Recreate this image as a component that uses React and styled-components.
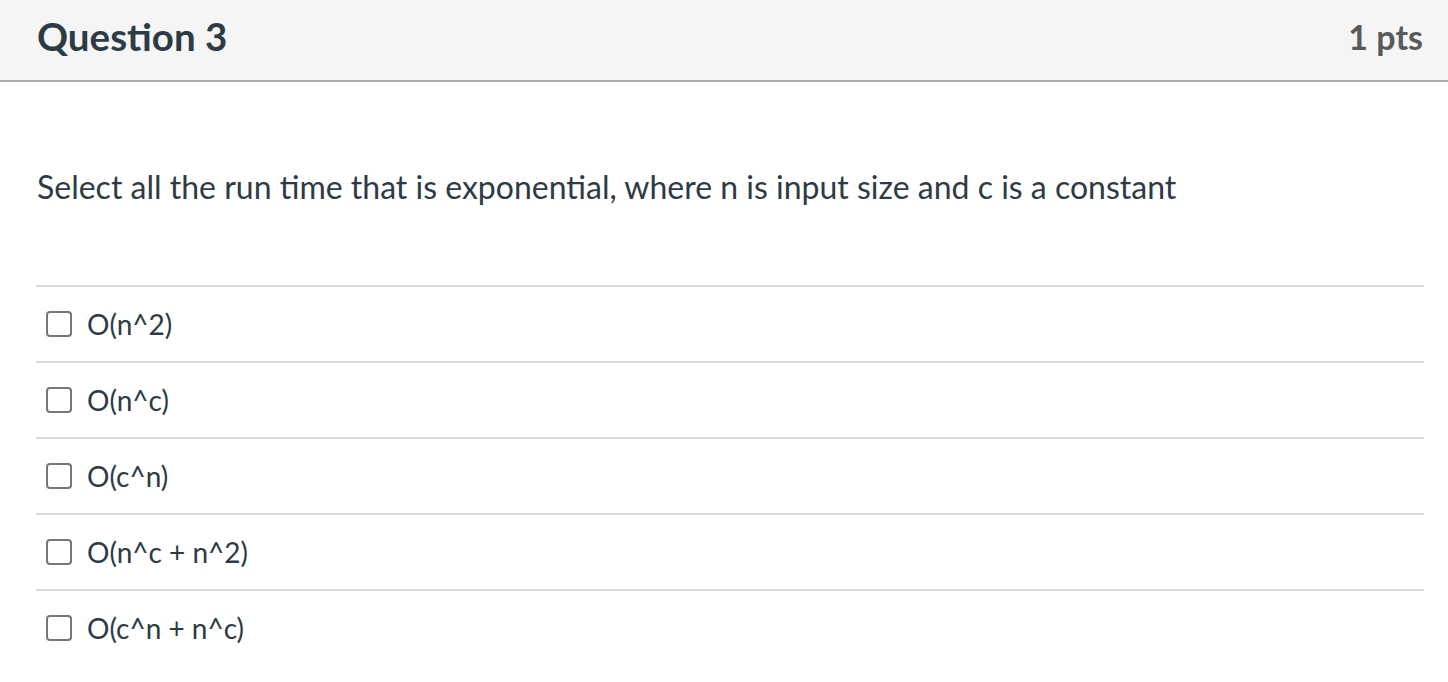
import React from "react";
import styled, { createGlobalStyle } from "styled-components";

const Global = createGlobalStyle`
  html, body { margin: 0; padding: 0; background: #fff; }
  body { font-family: Lato, "Open Sans", sans-serif; color: #2d3b45; }
`;

const Page = styled.div`
  width: 1448px;
  height: 682px;
  overflow: hidden;
`;

const Header = styled.header`
  box-sizing: border-box;
  height: 82px;
  background: #f5f5f5;
  border-bottom: 2px solid #aaaaaa;
  display: flex;
  align-items: center;
  justify-content: space-between;
  padding: 0 25px 8px 37px;
`;

const Title = styled.h2`
  margin: 0;
  font-size: 38.5px;
  font-weight: 700;
  color: #2d3b45;
`;

const Points = styled.div`
  font-size: 34px;
  font-weight: 700;
  color: #5a5a5a;
`;

const Body = styled.div`
  padding: 0 24px 0 36px;
`;

const QuestionText = styled.p`
  margin: 83px 0 76px 1px;
  font-size: 32px;
  line-height: 44px;
`;

const Answers = styled.div`
  display: flex;
  flex-direction: column;
`;

const Row = styled.label`
  display: flex;
  align-items: center;
  gap: 15px;
  height: 74px;
  border-top: 2px solid #dddddd;
  padding-left: 10px;
`;

const Box = styled.span`
  width: 22px;
  height: 22px;
  border: 2px solid #777777;
  border-radius: 4px;
  background: #fff;
  flex: none;
`;

const AnswerText = styled.span`
  font-size: 28px;
  color: #2d3b45;
`;

const answers = ["O(n^2)", "O(n^c)", "O(c^n)", "O(n^c + n^2)", "O(c^n + n^c)"];

export default function App() {
  return (
    <Page>
      <Global />
      <Header>
        <Title>Question 3</Title>
        <Points>1 pts</Points>
      </Header>
      <Body>
        <QuestionText>
          Select all the run time that is exponential, where n is input size and c is a constant
        </QuestionText>
        <Answers>
          {answers.map((a) => (
            <Row key={a}>
              <Box />
              <AnswerText>{a}</AnswerText>
            </Row>
          ))}
        </Answers>
      </Body>
    </Page>
  );
}
